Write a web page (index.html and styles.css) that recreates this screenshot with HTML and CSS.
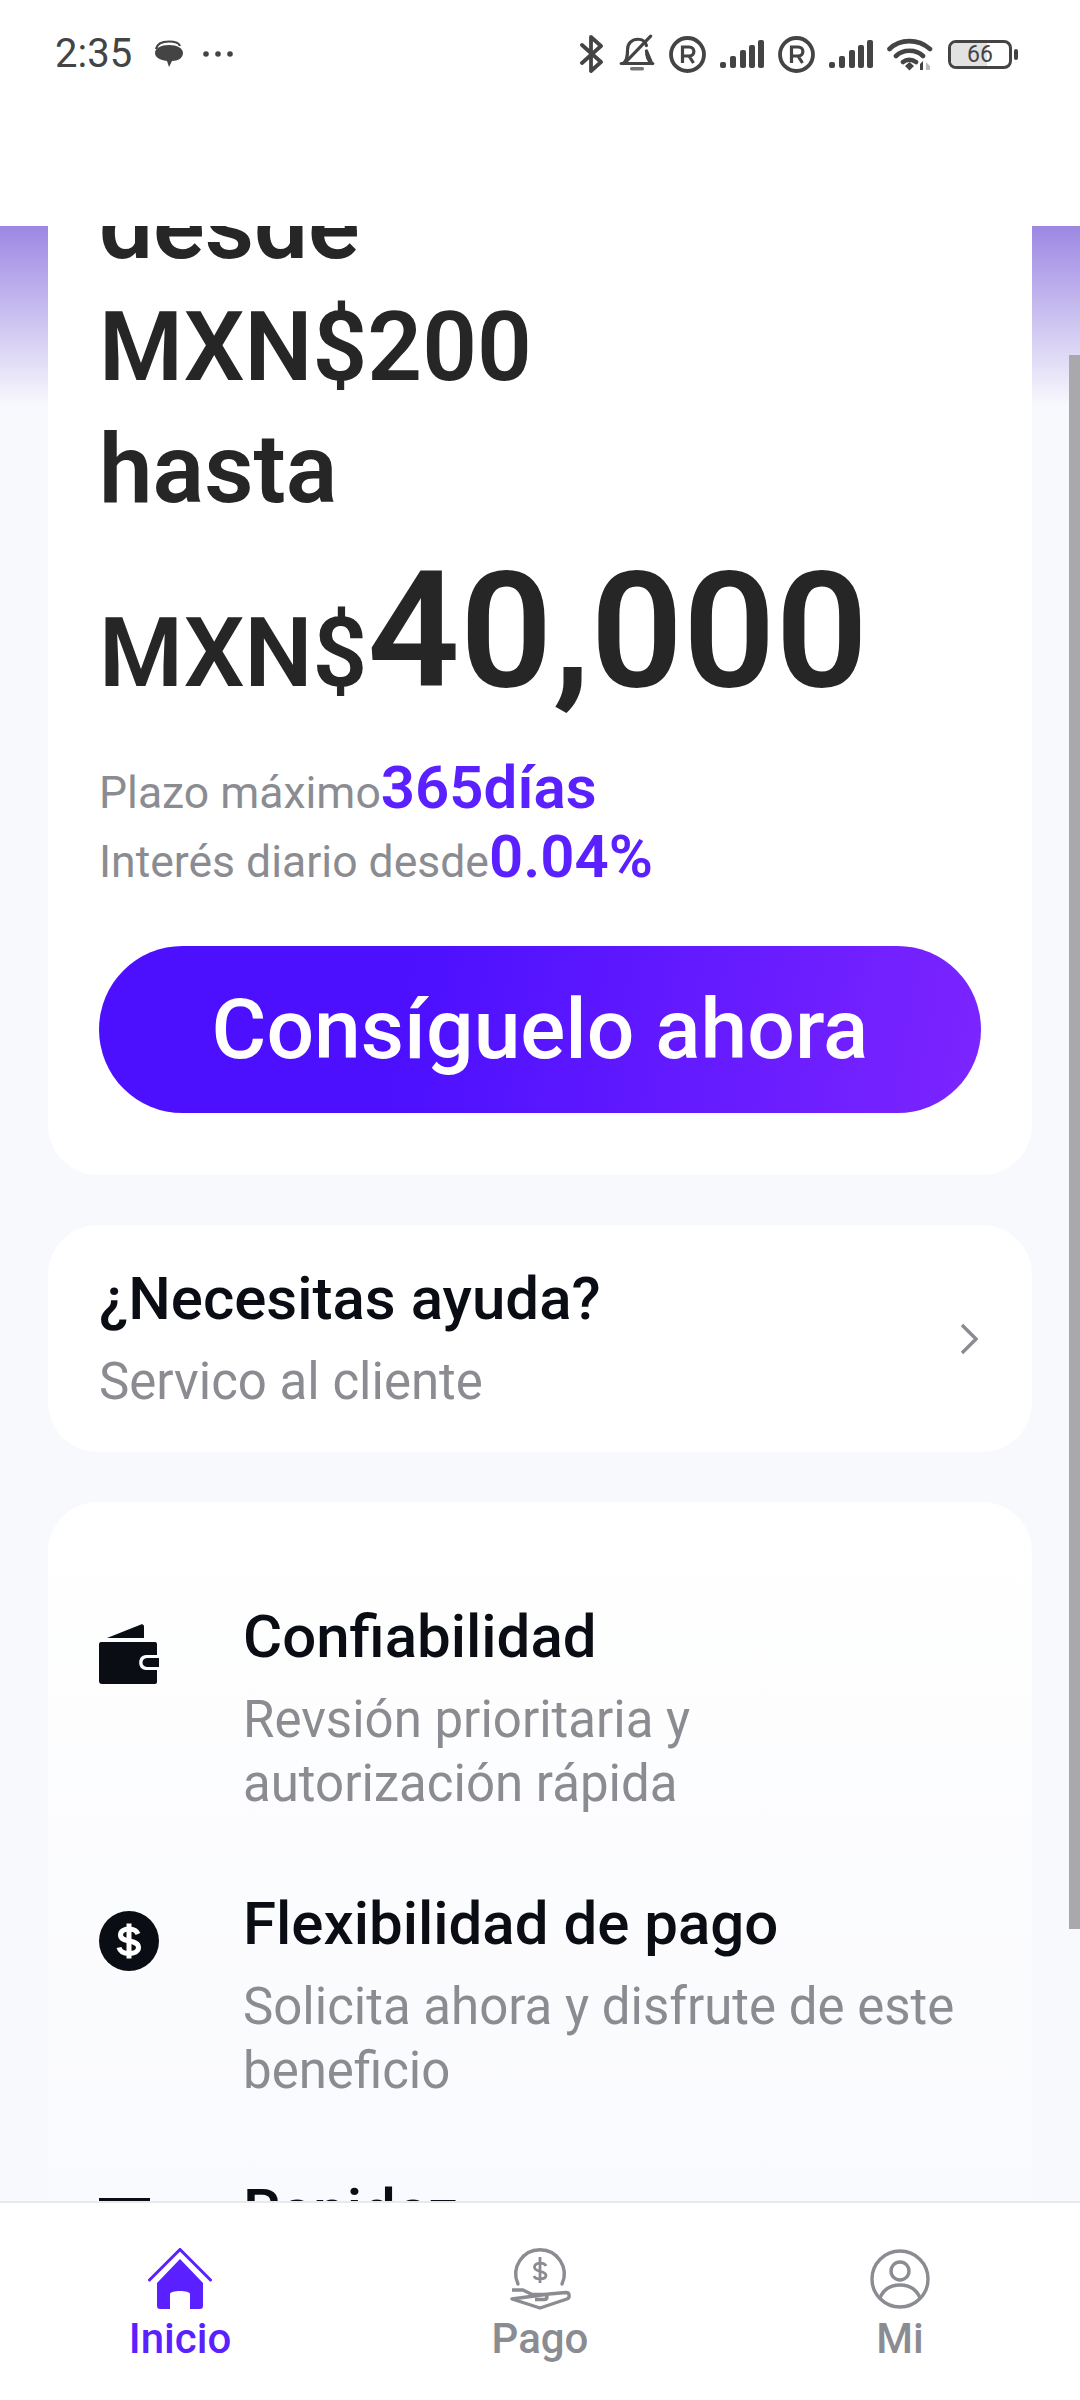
FILE: index.html
```html
<!DOCTYPE html>
<html lang="es">
  <head>
    <meta charset="UTF-8" />
    <meta name="viewport" content="width=device-width, initial-scale=1.0" />
    <title>Inicio</title>
    <link rel="stylesheet" href="styles.css">
  </head>
  <body>
    <div class="status-bar">
      <div class="status-left">
        <span class="time">2:35</span>
        <svg class="ic-chat" viewBox="0 0 30 28">
          <path d="M2 9C3 4 8 1.500 15 1.500C21 1.500 25 3 26 6" fill="none" stroke="#444" stroke-width="2.200"/>
          <path d="M15 5C23 5 29 8 29 13C29 18 24 21 18 21L15 27L13 21C6 20 1 17.500 1 13C1 8 7 5 15 5Z" fill="#444"/>
        </svg>
        <svg class="ic-dots" viewBox="0 0 30 6">
          <circle cx="3" cy="3" r="2.800" fill="#444"/>
          <circle cx="15" cy="3" r="2.800" fill="#444"/>
          <circle cx="27" cy="3" r="2.800" fill="#444"/>
        </svg>
      </div>
      <div class="status-right">
        <svg class="ic-bt" viewBox="0 0 24 38">
          <path d="M2 10L21 27L11 36V2L21 11L2 28" fill="none" stroke="#444" stroke-width="3.800" stroke-linejoin="round" stroke-linecap="round"/>
        </svg>
        <svg class="ic-bell" viewBox="0 0 34 38">
          <path d="M4 28C8 25 8 20 8 15C8 9 12 5 18 5C22 5 25 7 26 11M26 16C26 21 27 25 31 28Z" fill="none" stroke="#444" stroke-width="3" stroke-linejoin="round" stroke-linecap="round"/>
          <path d="M2 28H32" stroke="#444" stroke-width="3" stroke-linecap="round"/>
          <path d="M12 33H22" stroke="#777" stroke-width="3.400" stroke-linecap="round"/>
          <path d="M6 27L30 2" stroke="#444" stroke-width="3" stroke-linecap="round"/>
        </svg>
        <svg class="ic-reg" viewBox="0 0 37 37">
          <circle cx="18.500" cy="18.500" r="16.500" fill="none" stroke="#444" stroke-width="3.800"/>
          <path d="M13.500 27V11H20C26.500 11 26.500 20 20 20H13.500M20 20L24.500 27" fill="none" stroke="#444" stroke-width="3.200"/>
        </svg>
        <svg class="ic-signal" viewBox="0 0 44 28">
          <rect x="0" y="22" width="6" height="6" rx="2" fill="#444"/>
          <rect x="10" y="16" width="6" height="12" rx="2" fill="#444"/>
          <rect x="20" y="10" width="6" height="18" rx="2" fill="#444"/>
          <rect x="29" y="5" width="6" height="23" rx="2" fill="#444"/>
          <rect x="38" y="0" width="6" height="28" rx="2" fill="#444"/>
        </svg>
        <svg class="ic-reg" viewBox="0 0 37 37">
          <circle cx="18.500" cy="18.500" r="16.500" fill="none" stroke="#444" stroke-width="3.800"/>
          <path d="M13.500 27V11H20C26.500 11 26.500 20 20 20H13.500M20 20L24.500 27" fill="none" stroke="#444" stroke-width="3.200"/>
        </svg>
        <svg class="ic-signal" viewBox="0 0 44 28">
          <rect x="0" y="22" width="6" height="6" rx="2" fill="#444"/>
          <rect x="10" y="16" width="6" height="12" rx="2" fill="#444"/>
          <rect x="20" y="10" width="6" height="18" rx="2" fill="#444"/>
          <rect x="29" y="5" width="6" height="23" rx="2" fill="#444"/>
          <rect x="38" y="0" width="6" height="28" rx="2" fill="#444"/>
        </svg>
        <svg class="ic-wifi" viewBox="0 0 46 33">
          <path d="M2.500 11C13 0.500 31 0.500 43 11M9 18C16 11 29 11 36 18M16 24C19.500 21 25 21 29 24" fill="none" stroke="#444" stroke-width="4.600" stroke-linecap="round"/>
          <path d="M18 28L22.500 24L27 28L22.500 32.500Z" fill="#444"/>
          <path d="M33 32V26L36 23V32Z" fill="#444"/>
          <path d="M39 32V24L43 28V32Z" fill="#bbb"/>
        </svg>
        <div class="battery">
          <div class="battery-body">
            <div class="battery-level"></div>
            <span class="battery-num">66</span>
          </div>
          <div class="battery-nub"></div>
        </div>
      </div>
    </div>

    <div class="scroll">
      <div class="top-fade"></div>
      <div class="scroll-content">
        <div class="card hero">
          <div class="hero-title">desde<br />MXN$200<br />hasta</div>
          <div class="amount"><span>MXN$</span><span class="amount-big">40,000</span></div>
          <div class="terms">
            <div class="term">Plazo máximo<b>365días</b></div>
            <div class="term">Interés diario desde<b>0.04%</b></div>
          </div>
          <div class="cta">Consíguelo ahora</div>
        </div>

        <div class="card help">
          <div>
            <div class="title">¿Necesitas ayuda?</div>
            <div class="desc">Servico al cliente</div>
          </div>
          <svg class="chevron" viewBox="0 0 18 32">
            <path d="M2 2L16 16L2 30" fill="none" stroke="#8b8c91" stroke-width="3.400"/>
          </svg>
        </div>

        <div class="card features">
          <div class="feature">
            <svg class="feature-icon" viewBox="0 0 60 60">
              <path d="M8 14L42 0.500C44 0 45 1 45 3V14Z" fill="#0b0d14"/>
              <path d="M2 18H56C57.500 18 58 19 58 20V31H47C38 31 38 46 47 46H58V58C58 59 57 60 56 60H3C1 60 0 59 0 57V20C0 19 1 18 2 18Z" fill="#0b0d14"/>
              <path d="M48 34H60V43H48C42 43 42 34 48 34Z" fill="#0b0d14"/>
            </svg>
            <div>
              <div class="title">Confiabilidad</div>
              <div class="desc">Revsión prioritaria y<br />autorización rápida</div>
            </div>
          </div>
          <div class="feature">
            <svg class="feature-icon" viewBox="0 0 60 60">
              <circle cx="30" cy="30" r="30" fill="#0b0d14"/>
              <path d="M39 23C37.500 19 34 18 30 18C25 18 21.500 20 21.500 24C21.500 32.500 39.500 27.500 39.500 36.500C39.500 40.500 35 42.500 30 42.500C25 42.500 21 40.500 20 36.500" fill="none" stroke="#fff" stroke-width="5"/>
              <path d="M30 12.500V47.500" stroke="#fff" stroke-width="5"/>
            </svg>
            <div>
              <div class="title">Flexibilidad de pago</div>
              <div class="desc">Solicita ahora y disfrute de este<br />beneficio</div>
            </div>
          </div>
          <div class="feature">
            <svg class="feature-icon" viewBox="0 0 60 60">
              <rect x="0" y="0" width="51" height="5" fill="#0b0d14"/>
            </svg>
            <div>
              <div class="title">Rapidez</div>
            </div>
          </div>
        </div>
      </div>
      <div class="scrollbar"></div>
    </div>

    <div class="tabbar">
      <div class="tab active">
        <svg class="tab-icon" viewBox="0 0 64 62">
          <path d="M1.500 32L32 1.500L62.500 32" fill="none" stroke="#5a20ff" stroke-width="3" stroke-linecap="round"/>
          <path d="M32 11L55 35V58C55 60 54 61 52 61H42V46C42 42 22 42 22 46V61H12C10 61 9 60 9 58V35Z" fill="#5a20ff"/>
        </svg>
        <span>Inicio</span>
      </div>
      <div class="tab">
        <svg class="tab-icon" viewBox="0 0 64 62">
          <path d="M10 36A24.200 24.200 0 1 1 54 36" fill="none" stroke="#8b8c91" stroke-width="3.400" stroke-linecap="round"/>
          <path d="M38 18C36.500 14 27 14 26.500 19C26 25 38 21.500 38 27.500C37.500 32 27.500 32 26 28M32 9V35" fill="none" stroke="#8b8c91" stroke-width="2.800"/>
          <path d="M4 42H15L24 46.500H36C40 46.500 40 51.500 36 51.500H27M41 46L58 44.500C62 44.500 62 50 59 51L32 60L4 51Z" fill="none" stroke="#8b8c91" stroke-width="3.400" stroke-linejoin="round"/>
        </svg>
        <span>Pago</span>
      </div>
      <div class="tab">
        <svg class="tab-icon" viewBox="0 0 64 62">
          <circle cx="32" cy="31" r="28" fill="none" stroke="#8b8c91" stroke-width="3.400"/>
          <circle cx="32" cy="23" r="9" fill="none" stroke="#8b8c91" stroke-width="3.400"/>
          <path d="M12 50C16 40 23 37 32 37C41 37 48 40 52 50" fill="none" stroke="#8b8c91" stroke-width="3.400"/>
        </svg>
        <span>Mi</span>
      </div>
    </div>
  </body>
</html>
```
FILE: styles.css
```css
* {
  box-sizing: border-box;
}
html,
body {
  margin: 0;
  height: 100%;
}
body {
  width: 1080px;
  height: 2400px;
  display: flex;
  flex-direction: column;
  font-family: Roboto, "Noto Sans", sans-serif;
  background: #ffffff;
  overflow: hidden;
}

/* status bar */
.status-bar {
  height: 226px;
  flex: none;
  display: flex;
  justify-content: space-between;
  align-items: flex-start;
  padding: 35px 62px 0 55px;
  background: #ffffff;
}
.status-left,
.status-right {
  display: flex;
  align-items: center;
  height: 38px;
}
.time {
  font-size: 40px;
  line-height: 38px;
  color: #444444;
  width: 99px;
}
.ic-chat {
  width: 30px;
  height: 28px;
  margin-right: 19px;
}
.ic-dots {
  width: 30px;
  height: 6px;
}
.ic-bt {
  width: 24px;
  height: 38px;
  margin-right: 15px;
}
.ic-bell {
  width: 36px;
  height: 40px;
  margin-right: 14px;
}
.ic-reg {
  width: 37px;
  height: 37px;
  margin-right: 14px;
}
.ic-signal {
  width: 44px;
  height: 28px;
  margin-right: 14px;
}
.ic-wifi {
  width: 46px;
  height: 33px;
  margin-right: 15px;
}
.battery {
  display: flex;
  align-items: center;
}
.battery-body {
  position: relative;
  width: 64px;
  height: 29px;
  border: 3px solid #444444;
  border-radius: 8px;
  overflow: hidden;
}
.battery-level {
  width: 62%;
  height: 100%;
  background: #e2e2e2;
}
.battery-num {
  position: absolute;
  inset: 0;
  text-align: center;
  font-size: 23px;
  line-height: 23px;
  color: #444444;
}
.battery-nub {
  width: 4px;
  height: 11px;
  margin-left: 2px;
  border-radius: 2px;
  background: #444444;
}

/* scrolled area */
.scroll {
  position: relative;
  flex: 1;
  min-height: 0;
  overflow: hidden;
  background: #f8f9fd;
}
.top-fade {
  position: absolute;
  top: 0;
  left: 0;
  right: 0;
  height: 180px;
  background: linear-gradient(180deg, #9d87e3, #f8f9fd);
}
.scroll-content {
  position: relative;
  margin-top: -102px;
  padding: 0 48px;
  display: flex;
  flex-direction: column;
  gap: 50px;
}
.scrollbar {
  position: absolute;
  top: 129px;
  right: 0;
  width: 11px;
  height: 1574px;
  background: #a9a9ad;
}
.card {
  background: #ffffff;
  border-radius: 50px;
}
.hero {
  padding: 40px 51px 62px;
}
.hero-title {
  font-size: 96px;
  line-height: 122px;
  font-weight: 600;
  color: #262626;
}
.amount {
  display: flex;
  align-items: baseline;
  margin-top: 5px;
  font-size: 96px;
  font-weight: 600;
  color: #262626;
}
.amount-big {
  font-size: 162px;
  line-height: 192px;
}
.terms {
  margin-top: 32px;
}
.term {
  font-size: 44.500px;
  line-height: 69px;
  color: #8b8c91;
}
.term b {
  font-size: 60px;
  line-height: 0;
  font-weight: 600;
  color: #5a20ff;
}
.cta {
  margin-top: 49px;
  height: 167px;
  border-radius: 84px;
  display: flex;
  align-items: center;
  justify-content: center;
  font-size: 84px;
  font-weight: 500;
  color: #ffffff;
  background: linear-gradient(100deg, #4c10ff 35%, #7c25ff 100%);
}
.help {
  height: 227px;
  padding: 0 51px;
  display: flex;
  align-items: center;
  justify-content: space-between;
}
.chevron {
  width: 18px;
  height: 32px;
  margin-right: 3px;
}
.title {
  font-size: 60px;
  line-height: 72px;
  font-weight: 500;
  color: #0b0d14;
}
.desc {
  margin-top: 15px;
  font-size: 51px;
  line-height: 64px;
  color: #8b8c91;
}
.features {
  height: 900px;
  padding: 99px 51px 0;
  background: linear-gradient(180deg, #ffffff, #f9fafd 75%);
  display: flex;
  flex-direction: column;
  gap: 72px;
}
.feature {
  display: flex;
  align-items: flex-start;
}
.feature-icon {
  width: 60px;
  height: 60px;
  flex: none;
  margin-top: 23px;
  margin-right: 84px;
}

/* bottom tabs */
.tabbar {
  height: 199px;
  flex: none;
  position: relative;
  display: grid;
  grid-template-columns: repeat(3, 1fr);
  background: #ffffff;
  border-top: 2px solid #e8e9ec;
}
.tab {
  display: flex;
  flex-direction: column;
  align-items: center;
  padding-top: 45px;
  font-size: 42px;
  line-height: 54px;
  font-weight: 500;
  color: #8b8c91;
}
.tab.active {
  color: #5a20ff;
}
.tab-icon {
  width: 64px;
  height: 62px;
  margin-bottom: 2px;
}
```
